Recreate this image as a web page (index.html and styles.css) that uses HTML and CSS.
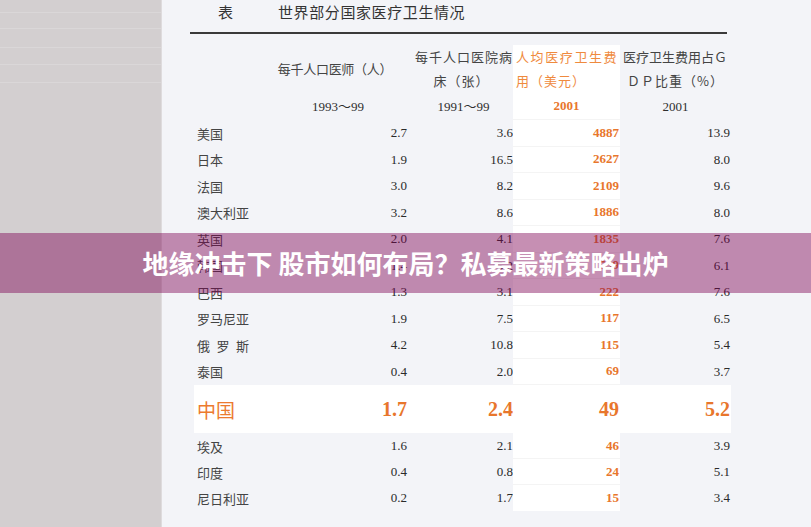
FILE: index.html
```html
<!DOCTYPE html>
<html lang="zh-CN">
<head>
<meta charset="utf-8">
<title>世界部分国家医疗卫生情况</title>
<link rel="stylesheet" href="styles.css">
</head>
<body>
<div class="page">
  <aside class="side">
    <div class="sline l1"></div>
    <div class="sline l2"></div>
    <div class="sline l3"></div>
    <div class="sline l4"></div>
    <div class="sline l5"></div>
  </aside>
  <main class="doc">
    <div class="title"><span class="tlabel">表</span><span class="tname">世界部分国家医疗卫生情况</span></div>
    <div class="rule"></div>
    <div class="head">
      <div class="h1">每千人口医师（人）</div>
      <div class="h2a">每千人口医院病</div>
      <div class="h3a hi">人均医疗卫生费</div>
      <div class="h4a">医疗卫生费用占Ｇ</div>
      <div class="h2b">床（张）</div>
      <div class="h3b hi">用（美元）</div>
      <div class="h4b">ＤＰ比重（%）</div>
      <div class="y1">1993～99</div>
      <div class="y2">1991～99</div>
      <div class="y3 hi">2001</div>
      <div class="y4">2001</div>
    </div>
    <div class="body">
      <div class="row"><span class="name">美国</span><span class="n c1">2.7</span><span class="n c2">3.6</span><span class="n c3">4887</span><span class="n c4">13.9</span></div>
      <div class="row"><span class="name">日本</span><span class="n c1">1.9</span><span class="n c2">16.5</span><span class="n c3">2627</span><span class="n c4">8.0</span></div>
      <div class="row"><span class="name">法国</span><span class="n c1">3.0</span><span class="n c2">8.2</span><span class="n c3">2109</span><span class="n c4">9.6</span></div>
      <div class="row"><span class="name">澳大利亚</span><span class="n c1">3.2</span><span class="n c2">8.6</span><span class="n c3">1886</span><span class="n c4">8.0</span></div>
      <div class="row"><span class="name">英国</span><span class="n c1">2.0</span><span class="n c2">4.1</span><span class="n c3">1835</span><span class="n c4">7.6</span></div>
      <div class="row"><span class="name">韩国</span><span class="n c1">1.4</span><span class="n c2">5.2</span><span class="n c3">539</span><span class="n c4">6.1</span></div>
      <div class="row"><span class="name">巴西</span><span class="n c1">1.3</span><span class="n c2">3.1</span><span class="n c3">222</span><span class="n c4">7.6</span></div>
      <div class="row"><span class="name">罗马尼亚</span><span class="n c1">1.9</span><span class="n c2">7.5</span><span class="n c3">117</span><span class="n c4">6.5</span></div>
      <div class="row"><span class="name spaced">俄罗斯</span><span class="n c1">4.2</span><span class="n c2">10.8</span><span class="n c3">115</span><span class="n c4">5.4</span></div>
      <div class="row"><span class="name">泰国</span><span class="n c1">0.4</span><span class="n c2">2.0</span><span class="n c3">69</span><span class="n c4">3.7</span></div>
      <div class="row china"><span class="name">中国</span><span class="n c1">1.7</span><span class="n c2">2.4</span><span class="n c3">49</span><span class="n c4">5.2</span></div>
      <div class="row low"><span class="name">埃及</span><span class="n c1">1.6</span><span class="n c2">2.1</span><span class="n c3">46</span><span class="n c4">3.9</span></div>
      <div class="row low"><span class="name">印度</span><span class="n c1">0.4</span><span class="n c2">0.8</span><span class="n c3">24</span><span class="n c4">5.1</span></div>
      <div class="row low last"><span class="name">尼日利亚</span><span class="n c1">0.2</span><span class="n c2">1.7</span><span class="n c3">15</span><span class="n c4">3.4</span></div>
    </div>
  </main>
</div>
<div class="banner">地缘冲击下 股市如何布局？私募最新策略出炉</div>
</body>
</html>
```

FILE: styles.css
```css
html, body {
  margin: 0;
  padding: 0;
}
body {
  width: 811px;
  height: 527px;
  overflow: hidden;
  position: relative;
  background: #f3f4f8;
  font-family: "Noto Sans CJK SC", "Liberation Serif", sans-serif;
  color: #3a3a3a;
}
.page {
  display: flex;
  height: 527px;
}
.side {
  width: 161px;
  flex: none;
  background: #d3cfd0;
  border-right: 1px solid #dedbdd;
  display: flex;
  flex-direction: column;
}
.sline {
  height: 1px;
  background: #dad7d8;
}
.l1 { margin-top: 12px; }
.l2 { margin-top: 15px; }
.l3 { margin-top: 18px; }
.l4 { margin-top: 16px; }
.l5 { margin-top: 17px; }

.doc {
  flex: 1;
  background: #f3f4f8;
}
.title {
  height: 24px;
  line-height: 24px;
  font-size: 15px;
  color: #333;
  padding-left: 56px;
  display: flex;
}
.tlabel { width: 60px; }
.tname { letter-spacing: 0.6px; }
.rule {
  margin: 8px 0 0 28px;
  width: 537px;
  height: 2px;
  background: #3a3a3a;
}

.head, .row {
  display: grid;
  grid-template-columns: 66px 150px 103px 107px 111px;
  margin-left: 32px;
  width: 537px;
}
.head {
  margin-top: 11px;
  grid-template-rows: 24px 24px 27px;
  font-size: 13px;
  color: #444;
  align-items: center;
}
.head > div { line-height: 24px; white-space: nowrap; }
.h1 { grid-column: 2; grid-row: 1 / span 2; text-align: center; letter-spacing: -0.3px; }
.h2a { grid-column: 3; grid-row: 1; text-align: right; letter-spacing: 1px; }
.h3a { grid-column: 4; grid-row: 1; padding-left: 3px; letter-spacing: 1.6px; }
.h4a { grid-column: 5; grid-row: 1; padding-left: 3px; }
.h2b { grid-column: 3; grid-row: 2; text-align: center; letter-spacing: 1px; }
.h3b { grid-column: 4; grid-row: 2; padding-left: 3px; letter-spacing: 1px; }
.h4b { grid-column: 5; grid-row: 2; text-align: center; letter-spacing: 1px; }
.y1, .y2, .y3, .y4 {
  grid-row: 3;
  font-family: "Liberation Serif", "Noto Sans CJK SC", serif;
  text-align: center;
  color: #2e2e2e;
}
.y1 { grid-column: 2; padding-left: 6px; }
.y2 { grid-column: 3; padding-left: 4px; }
.y3 { grid-column: 4; }
.y4 { grid-column: 5; }
.head .hi {
  background: #ffffff;
  color: #ef8a3e;
  align-self: stretch;
  display: flex;
  align-items: center;
}
.head .y3 {
  justify-content: center;
  font-weight: bold;
  color: #e8762c;
  border-bottom: 1px solid #f4f4f4;
}

.row {
  height: 26.5px;
  align-items: center;
  font-size: 13px;
}
.row.low { height: 26px; }
.row > span { align-self: stretch; display: flex; align-items: center; }
.name {
  padding-left: 3px;
  color: #444;
}
.name.spaced { letter-spacing: 6.5px; }
.n {
  justify-content: flex-end;
  font-family: "Liberation Serif", serif;
  color: #2a2a2a;
}
.c1 { padding-right: 3px; }
.c2 { padding-right: 0; }
.c3 {
  padding-right: 1px;
  background: #ffffff;
  color: #e8762c;
  font-weight: bold;
  border-bottom: 1px solid #f4f4f4;
  box-sizing: border-box;
}
.c4 { padding-right: 1px; }
.row.last .c3 { border-bottom: none; }

.row.china {
  height: 48px;
  background: #ffffff;
  font-size: 20px;
}
.row.china .name {
  color: #ec7a2e;
  font-size: 19px;
}
.row.china .n {
  color: #e8762c;
  font-weight: bold;
  font-size: 20px;
  border-bottom: none;
}

.banner {
  position: absolute;
  left: 0;
  top: 233px;
  width: 811px;
  height: 60px;
  background: rgba(126, 1, 82, 0.44);
  color: #ffffff;
  font-family: "Noto Sans CJK SC", sans-serif;
  font-weight: bold;
  font-size: 26px;
  line-height: 60px;
  text-align: center;
}
```
